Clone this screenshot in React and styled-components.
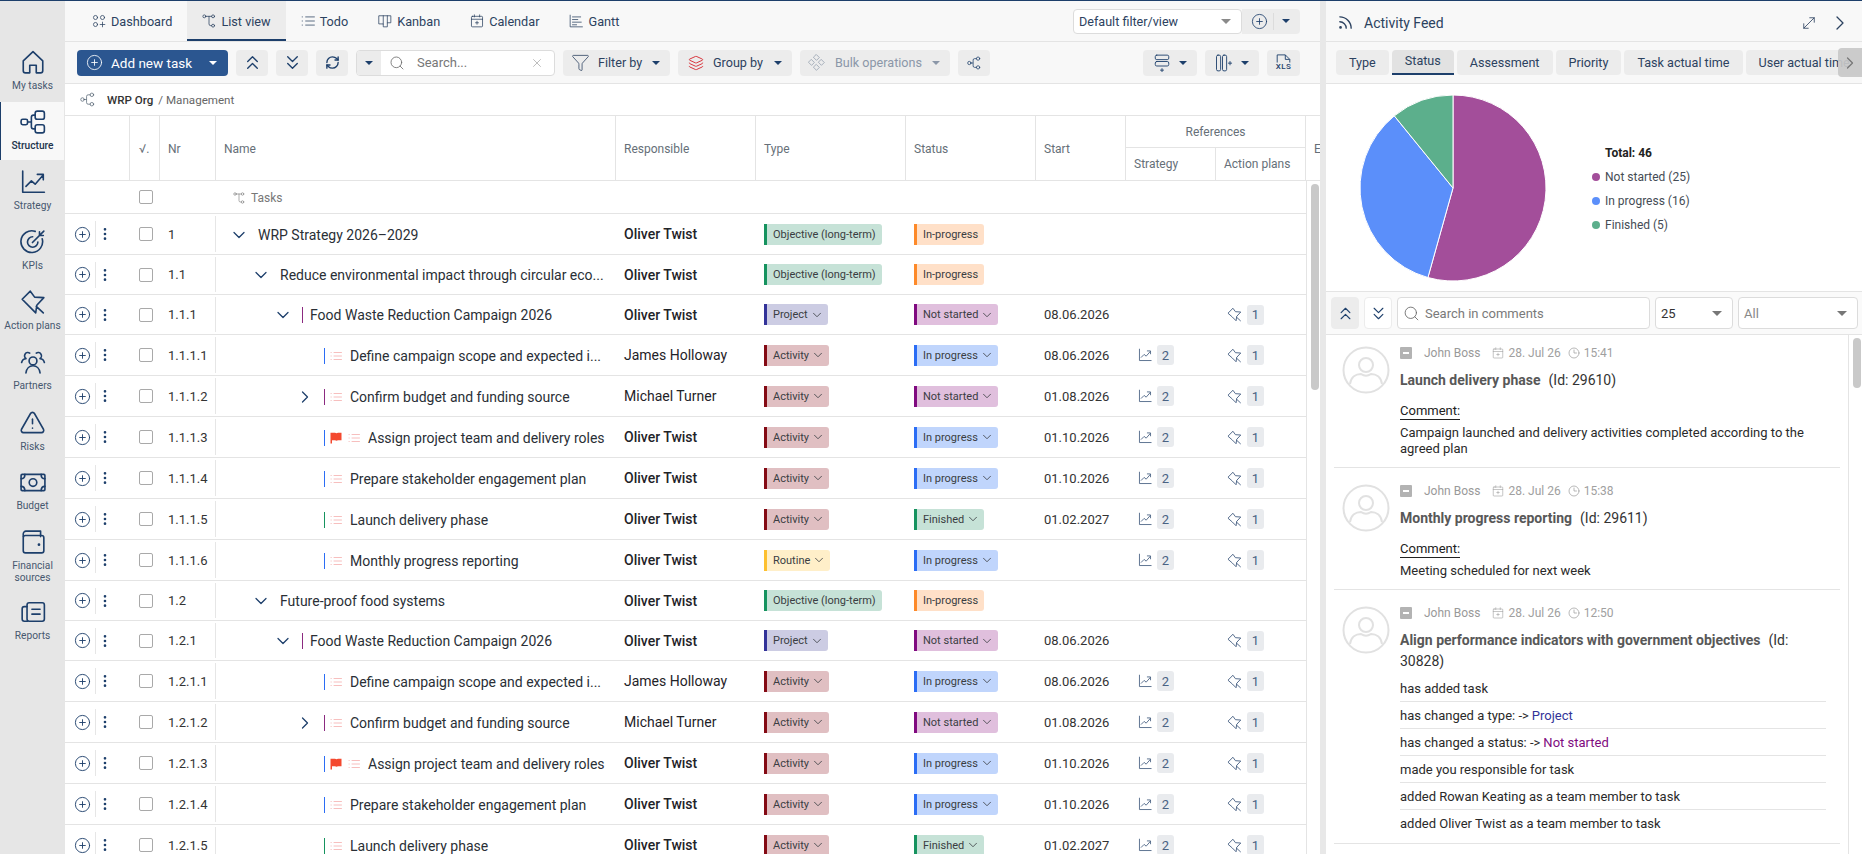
import React from "react";
import styled, { createGlobalStyle, css } from "styled-components";
import {
  ChevronDown, ChevronRight, ChevronsUp, ChevronsDown, CirclePlus, EllipsisVertical, Filter, Layers,
  MoveDiagonal, RefreshCw, Rss, Search, TriangleAlert, X,
} from "lucide-react";

const Global = createGlobalStyle`
  * { box-sizing: border-box; }
  html, body { margin: 0; padding: 0; height: 100%; overflow: hidden; }
  body { font-family: Roboto, "Liberation Sans", sans-serif; color: #212529; background: #fff; }
`;

const NAVY = "#1d3f6b";
const LINE = "#e4e4e4";

const Glyph = styled.svg.attrs({ viewBox: "0 0 24 24", fill: "none", stroke: "currentColor", strokeLinecap: "round", strokeLinejoin: "round" })`
  width: ${(p) => p.$s || 16}px;
  height: ${(p) => p.$s || 16}px;
  stroke-width: ${(p) => p.$w || 1.5};
  flex: none;
  display: block;
`;

const paths = {
  home: <path d="M3 11 12 2.5l9 8.5v9a2 2 0 0 1-2 2h-4v-7H9v7H5a2 2 0 0 1-2-2z" />,
  structure: (
    <>
      <rect x="1" y="9.5" width="6" height="5" rx="1.5" />
      <rect x="14" y="2" width="8.5" height="7.5" rx="2" />
      <rect x="14" y="14.5" width="8.5" height="7.5" rx="2" />
      <path d="M7 12h3.5M14 5.7h-1.5a2 2 0 0 0-2 2v8.6a2 2 0 0 0 2 2H14" />
    </>
  ),
  chart: <path d="M2.5 2v19.5H22.5M5.5 16l5-5 3.5 3 7-8M16 5h5.5v5" />,
  target: (
    <>
      <path d="M20.5 9a10 10 0 1 1-6.5-6.8" />
      <path d="M16.5 12a4.8 4.8 0 1 1-4.8-4.8" />
      <path d="M11.5 12.5 22 2M18 2.5V6h3.5" />
    </>
  ),
  pin: <path d="M2 9.5 9.5 2l4 5.5 8.5.5-6.5 7-1 7-5.5-5.5zM15 16l6.5 6" />,
  partners: (
    <>
      <circle cx="12" cy="11" r="3.6" />
      <path d="M5.5 22c.5-3.5 3-6.5 6.500-6.500s6 3 6.500 6.500" />
      <path d="M9 3.800a3 3 0 0 0-3.500 5M15 3.800a3 3 0 0 1 3.500 5M1.500 12.500c.5-2 2-3.500 4-3.500M22.500 12.500c-.5-2-2-3.500-4-3.500" />
    </>
  ),
  money: (
    <>
      <rect x="1" y="5" width="22" height="15" rx="1" />
      <circle cx="12" cy="12.500" r="3.500" />
      <path d="M1 9c2 0 3.500-1.500 3.500-4M23 9c-2 0-3.500-1.500-3.500-4M1 16c2 0 3.500 1.500 3.500 4M23 16c-2 0-3.500 1.500-3.500 4" />
    </>
  ),
  wallet: (
    <>
      <path d="M3 7V4.500A2.500 2.500 0 0 1 5.500 2H19v5" />
      <rect x="3" y="6" width="19" height="16" rx="2" />
      <path d="M17.500 14.500h.01" strokeWidth="2.500" />
    </>
  ),
  reports: (
    <>
      <rect x="6.500" y="3.500" width="16" height="17" rx="2" />
      <path d="M6.500 7H4a2 2 0 0 0-2 2v9.500a2 2 0 0 0 2 2h3M11 9.500h7.500M11 14h7.500" />
    </>
  ),
  dash: (
    <>
      <circle cx="6" cy="6" r="3.500" /><circle cx="18" cy="6" r="3.500" /><circle cx="6" cy="18" r="3.500" />
      <path d="M18 14v8M14 18h8" />
    </>
  ),
  tree: (
    <>
      <circle cx="4" cy="4" r="2.500" /><circle cx="19" cy="4" r="2.500" /><circle cx="19" cy="20" r="2.500" />
      <path d="M6.500 4h10M12 4v13a3 3 0 0 0 3 3h1.500" />
    </>
  ),
  todo: <path d="M8 5h15M8 12h15M8 19h15M2 5h.5M2 12h.5M2 19h.5" />,
  kanban: <path d="M2 3h20v12H16v7H9v-5H2zM9 3v14M16 3v12" />,
  calendar: (
    <>
      <rect x="2.500" y="4" width="19" height="18" rx="1.500" />
      <path d="M2.500 9h19M7.500 1.500V5M16.500 1.500V5M12 12.500v5M9.500 15h5" />
    </>
  ),
  gantt: <path d="M2 2v20h21M6 5h14M6 9.500h9M6 14h15M6 18.500h7" />,
  share: (
    <>
      <circle cx="4" cy="12" r="2.800" /><circle cx="19" cy="4.500" r="2.800" /><circle cx="19" cy="19.500" r="2.800" />
      <path d="M6.800 12h3M16.200 4.500H13a2.500 2.500 0 0 0-2.500 2.500v10a2.500 2.500 0 0 0 2.500 2.500h3.200" />
    </>
  ),
  diamonds: <path d="M12 1l4 4-4 4-4-4zM5 8l4 4-4 4-4-4zM19 8l4 4-4 4-4-4zM12 15l4 4-4 4-4-4z" />,
  addRow: (
    <>
      <rect x="3" y="1.500" width="18" height="6" rx="2" />
      <rect x="3" y="10" width="18" height="6" rx="2" />
      <path d="M12 19.500v4M10 21.500h4" />
    </>
  ),
  addCol: (
    <>
      <rect x="2" y="1.500" width="5.500" height="21" rx="2" />
      <rect x="10" y="1.500" width="5.500" height="21" rx="2" />
      <path d="M20 10v4.500M17.800 12.200h4.400" />
    </>
  ),
  clock: (
    <>
      <circle cx="12" cy="12" r="10" />
      <path d="M12 6v6h5" />
    </>
  ),
};

const Icon = ({ name, s, w }) => <Glyph $s={s} $w={w}>{paths[name]}</Glyph>;

const Shell = styled.div`
  display: flex;
  height: 100vh;
  border-top: 1px solid ${NAVY};
  overflow: hidden;
`;

/* ---------- sidebar ---------- */
const Sidebar = styled.nav`
  width: 65px;
  flex: none;
  background: #e6e6e6;
  padding-top: 41px;
  display: flex;
  flex-direction: column;
`;
const SideItem = styled.div`
  height: ${(p) => (p.$tall ? 70 : 60)}px;
  padding-top: 7px;
  display: flex;
  flex-direction: column;
  align-items: center;
  color: ${NAVY};
  ${(p) => p.$active && css`
    background: #f8f8f8;
    border-left: 1px solid ${NAVY};
    height: 58px;
    margin-bottom: 2px;
    margin-right: 1px;
  `}
`;
const SideLabel = styled.span`
  margin-top: 5px;
  font-size: 10.2px;
  line-height: 12px;
  text-align: center;
  color: ${(p) => (p.$active ? "#22344c" : "#46586f")};
  font-weight: ${(p) => (p.$active ? 500 : 400)};
`;

/* ---------- main ---------- */
const Main = styled.main`
  width: 1255px;
  flex: none;
  display: flex;
  flex-direction: column;
  min-height: 0;
`;
const TabBar = styled.div`
  height: 41px;
  flex: none;
  display: flex;
  align-items: stretch;
  padding: 0 20px 0 12px;
  background: #f8f8f8;
  border-bottom: 1px solid ${LINE};
`;
const Tab = styled.div`
  display: flex;
  align-items: center;
  gap: 5px;
  padding: 0 15px;
  font-size: 12.7px;
  color: #2c4260;
  ${(p) => p.$active && css`
    background: #ececec;
    box-shadow: inset 0 -2px 0 ${NAVY};
  `}
`;
const ViewPicker = styled.div`
  margin-left: auto;
  display: flex;
  align-items: center;
`;
const ViewSelect = styled.div`
  width: 169px;
  height: 25px;
  background: #fff;
  border: 1px solid #dcdcdc;
  border-radius: 4px;
  display: flex;
  align-items: center;
  justify-content: space-between;
  padding: 0 10px 0 5px;
  font-size: 12.6px;
  color: #2c4260;
`;
const ViewActions = styled.div`
  width: 58px;
  height: 25px;
  background: #ececec;
  border-radius: 0 4px 4px 0;
  display: flex;
  align-items: center;
  padding-left: 9px;
  color: ${NAVY};
`;
const ViewDivider = styled.span`
  width: 1px;
  height: 17px;
  background: #dcdcdc;
  margin: 0 8px 0 5px;
`;
const Caret = styled.span`
  width: 0;
  height: 0;
  flex: none;
  margin-left: ${(p) => (p.$push ? "auto" : 0)};
  border-left: ${(p) => p.$s || 4}px solid transparent;
  border-right: ${(p) => p.$s || 4}px solid transparent;
  border-top: ${(p) => p.$s || 4}px solid ${(p) => p.$c || NAVY};
`;

const Toolbar = styled.div`
  height: 42px;
  flex: none;
  display: flex;
  align-items: center;
  gap: 8px;
  padding: 0 20px 0 12px;
  background: #f8f8f8;
  border-bottom: 1px solid ${LINE};
`;
const ToolButton = styled.div`
  height: 26px;
  width: ${(p) => p.$w}px;
  flex: none;
  display: flex;
  align-items: center;
  justify-content: ${(p) => p.$justify || "center"};
  gap: ${(p) => p.$gap ?? 8}px;
  padding: ${(p) => p.$pad || 0};
  border-radius: 4px;
  background: ${(p) => (p.$bg ? p.$bg : "#ececec")};
  color: ${(p) => (p.$muted ? "#8b97a8" : p.$fg || "#2c4260")};
  font-size: 12.6px;
  white-space: nowrap;
`;
const AddLabel = styled.span`
  font-size: 13.5px;
  flex: 1;
`;
const SearchGroup = styled.div`
  width: 199px;
  height: 26px;
  flex: none;
  display: flex;
  align-items: center;
  border: 1px solid #dcdcdc;
  border-radius: 4px;
  background: #fff;
  overflow: hidden;
  color: #55626f;
`;
const SearchCaret = styled.div`
  width: 24px;
  align-self: stretch;
  background: #ececec;
  display: flex;
  align-items: center;
  justify-content: center;
`;
const SearchIcon = styled.span`
  margin-left: 8px;
  display: flex;
  color: #666;
`;
const SearchText = styled.span`
  flex: 1;
  margin-left: 12px;
  font-size: 13px;
  color: #777;
`;
const SearchClear = styled.span`
  margin-right: 10px;
  display: flex;
  color: #999;
`;
const Spacer = styled.div`flex: 1;`;

const Crumbs = styled.div`
  height: 32px;
  flex: none;
  display: flex;
  align-items: center;
  padding-left: 15px;
  border-bottom: 1px solid ${LINE};
  font-size: 11.6px;
  color: #666;
`;
const CrumbIcon = styled.span`
  display: flex;
  color: #4a5a6a;
`;
const CrumbRoot = styled.span`
  margin-left: 12px;
  margin-right: 5px;
  color: #333;
  font-weight: 500;
`;

const COLS = "65px 30px 56px 400px 140px 150px 130px 90px 90px 90px 1fr";

const HeaderGrid = styled.div`
  height: 65px;
  flex: none;
  display: grid;
  grid-template-columns: ${COLS};
  grid-template-rows: 32px 1fr;
  border-bottom: 1px solid ${LINE};
  font-size: 12px;
  color: #666f78;
`;
const HeadCell = styled.div`
  grid-row: 1 / 3;
  grid-column: ${(p) => p.$col || "auto"};
  display: flex;
  align-items: center;
  padding-left: ${(p) => p.$pad ?? 8}px;
  padding-top: 2px;
  border-right: ${(p) => (p.$last ? "none" : `1px solid ${LINE}`)};
  overflow: hidden;
  white-space: nowrap;
`;
const RefHead = styled.div`
  grid-column: 9 / 11;
  grid-row: 1;
  display: flex;
  align-items: center;
  justify-content: center;
  border-right: 1px solid ${LINE};
  border-bottom: 1px solid ${LINE};
`;
const SubHead = styled.div`
  grid-row: 2;
  grid-column: ${(p) => p.$col};
  display: flex;
  align-items: center;
  padding-left: 8px;
  border-right: 1px solid ${LINE};
`;

const TableBody = styled.div`
  flex: 1;
  min-height: 0;
  display: flex;
  overflow: hidden;
`;
const RowsColumn = styled.div`
  width: 1241px;
  flex: none;
`;
const FilterRow = styled.div`
  height: 33px;
  display: grid;
  grid-template-columns: ${COLS};
  border-bottom: 1px solid ${LINE};
  font-size: 12px;
  color: #666f78;
  align-items: center;
`;
const Tasks = styled.div`
  display: flex;
  align-items: center;
  gap: 6px;
  padding-left: 17px;
  padding-top: 1px;
  color: #777;
`;
const Row = styled.div`
  height: ${(p) => p.$h}px;
  display: grid;
  grid-template-columns: ${COLS};
  align-items: center;
  border-bottom: 1px solid ${LINE};
  font-size: 13px;
`;
const Actions = styled.div`
  display: flex;
  align-items: center;
  color: ${NAVY};
  padding-left: 9px;
`;
const ActionSep = styled.span`
  width: 1px;
  height: 26px;
  background: #e6e6e6;
  margin: 0 1px 0 4px;
`;
const CheckCell = styled.div`
  padding-left: 9px;
`;
const Check = styled.span`
  display: block;
  width: 14px;
  height: 14px;
  border: 1.5px solid #a9a9a9;
  border-radius: 2px;
  background: #fff;
`;
const NrCell = styled.div`
  padding-left: 8px;
  font-size: 13px;
  color: #333;
  white-space: nowrap;
`;
const NameCell = styled.div`
  align-self: stretch;
  margin: 2px 0 2px -1px;
  display: flex;
  align-items: center;
  padding-left: ${(p) => 17 + (p.$level - 1) * 22}px;
  padding-right: 10px;
  padding-top: 1px;
  border-left: 1px solid #e6e6e6;
  min-width: 0;
  color: #2a2f36;
`;
const Toggle = styled.span`
  width: 12px;
  flex: none;
  display: flex;
  justify-content: center;
  color: ${NAVY};
  margin-right: 13px;
  visibility: ${(p) => (p.$hidden ? "hidden" : "visible")};
  & > svg { flex: none; }
`;
const LevelBar = styled.span`
  width: 1px;
  height: 16px;
  flex: none;
  background: ${(p) => p.$c};
  margin-right: ${(p) => p.$gap}px;
`;
const ListMark = styled.span`
  color: #f08a88;
  margin-right: 8px;
  flex: none;
`;
const FlagMark = styled.svg.attrs({ viewBox: "0 0 12 12" })`
  width: 12px;
  height: 12px;
  flex: none;
  margin: 0 6px 0 5px;
`;
const NameText = styled.span`
  font-size: 14px;
  white-space: nowrap;
  min-width: 0;
`;
const Person = styled.div`
  padding-left: 8px;
  font-size: 14px;
  font-weight: ${(p) => (p.$bold ? 500 : 400)};
  color: #1f2328;
  white-space: nowrap;
`;
const BadgeCell = styled.div`padding-left: 8px;`;
const Badge = styled.span`
  display: inline-flex;
  align-items: center;
  gap: 2px;
  height: 21px;
  padding: 0 ${(p) => (p.$open ? 4 : 6)}px 0 6px;
  background: ${(p) => p.$bg};
  border-left: 3px solid ${(p) => p.$bar};
  border-radius: 0 3px 3px 0;
  font-size: 11px;
  color: #3a3d42;
  white-space: nowrap;
`;
const DateCell = styled.div`
  padding-left: 8px;
  font-size: 13px;
  color: #333;
`;
const RefCell = styled.div`
  padding-left: ${(p) => p.$pad}px;
  display: flex;
  align-items: center;
  gap: 5px;
  color: #4a6284;
`;
const CountChip = styled.span`
  width: 17px;
  height: 20px;
  border-radius: 3px;
  background: #e9ebee;
  font-size: 13px;
  display: flex;
  align-items: center;
  justify-content: center;
  color: #4a6284;
`;
const Track = styled.div`
  flex: 1;
  border-left: 1px solid ${LINE};
  padding: 3px 2px 0 4px;
`;
const Thumb = styled.div`
  width: 8px;
  height: ${(p) => p.$h}px;
  background: #c9c9c9;
  border-radius: 4px;
`;

/* ---------- feed ---------- */
const Splitter = styled.div`
  width: 6px;
  flex: none;
  background: #e8e8e8;
`;
const Feed = styled.aside`
  flex: 1;
  min-width: 0;
  display: flex;
  flex-direction: column;
`;
const FeedHead = styled.div`
  height: 41px;
  flex: none;
  display: flex;
  align-items: center;
  padding: 3px 10px 0 11px;
  gap: 10px;
  background: #f8f8f8;
  border-bottom: 1px solid ${LINE};
  color: #2c4260;
`;
const FeedTitle = styled.span`
  flex: 1;
  font-size: 14px;
`;
const FeedTabs = styled.div`
  height: 42px;
  flex: none;
  position: relative;
  display: flex;
  align-items: center;
  gap: 3px;
  padding: 0 0 0 10px;
  background: #f8f8f8;
  border-bottom: 1px solid ${LINE};
  overflow: hidden;
`;
const FeedTab = styled.div`
  height: 25px;
  flex: none;
  padding: 0 13px;
  display: flex;
  align-items: center;
  border-radius: 4px;
  background: #ececec;
  font-size: 12.6px;
  color: #2c4260;
  white-space: nowrap;
  ${(p) => p.$active && css`
    background: #e2e2e2;
    border-radius: 4px 4px 0 0;
    border-bottom: 2px solid ${NAVY};
    padding-bottom: 3px;
  `}
`;
const TabScroll = styled.div`
  position: absolute;
  right: 0;
  top: 6px;
  width: 24px;
  height: 29px;
  background: rgba(200, 200, 200, 0.92);
  border-radius: 4px 0 0 4px;
  display: flex;
  align-items: center;
  justify-content: center;
  color: #777;
`;
const ChartArea = styled.div`
  height: 208px;
  flex: none;
  display: flex;
  align-items: center;
  padding-left: 33px;
  border-bottom: 1px solid ${LINE};
`;
const PieSvg = styled.svg.attrs({ viewBox: "0 0 188 188" })`
  width: 188px;
  height: 188px;
  flex: none;
`;
const Legend = styled.div`
  margin: 2px 0 0 45px;
  display: flex;
  flex-direction: column;
  gap: 8px;
  font-size: 12px;
  color: #454c55;
`;
const LegendTotal = styled.div`
  margin-left: 13px;
  line-height: 16px;
  font-weight: 700;
  color: #222;
`;
const LegendRow = styled.div`
  display: flex;
  align-items: center;
  gap: 5px;
  line-height: 16px;
`;
const Dot = styled.span`
  width: 8px;
  height: 8px;
  border-radius: 50%;
  background: ${(p) => p.$c};
`;
const FeedTools = styled.div`
  height: 43px;
  flex: none;
  display: flex;
  align-items: center;
  gap: 5px;
  padding-left: 5px;
  border-bottom: 1px solid ${LINE};
  background: #fafafa;
  color: ${NAVY};
`;
const SquareButton = styled.div`
  width: 28px;
  height: 32px;
  border-radius: 4px;
  display: flex;
  align-items: center;
  justify-content: center;
  background: ${(p) => (p.$on ? "#ececec" : "#fff")};
  border: 1px solid #ececec;
`;
const FeedInput = styled.div`
  height: 32px;
  width: ${(p) => p.$w}px;
  flex: none;
  background: #fff;
  border: 1px solid #dcdcdc;
  border-radius: 4px;
  display: flex;
  align-items: center;
  justify-content: ${(p) => (p.$select ? "space-between" : "flex-start")};
  gap: 5px;
  padding: 1px ${(p) => (p.$select ? 10 : 5)}px 0 5px;
  font-size: 13px;
  color: ${(p) => p.$c || "#7a7a7a"};
`;
const FeedBody = styled.div`
  flex: 1;
  min-height: 0;
  display: flex;
  overflow: hidden;
`;
const FeedList = styled.div`
  width: 522px;
  flex: none;
  padding: 0 8px;
`;
const FeedItem = styled.article`
  display: flex;
  padding: 16px 0 10px 8px;
  border-bottom: 1px solid ${LINE};
  &:first-child { padding-top: 11px; }
`;
const Avatar = styled.svg.attrs({ viewBox: "0 0 48 48", fill: "none", stroke: "#e1e1e1", strokeWidth: 2 })`
  width: 48px;
  height: 48px;
  flex: none;
  margin-right: 10px;
`;
const FeedContent = styled.div`
  flex: 1;
  min-width: 0;
  padding-right: 14px;
`;
const Meta = styled.div`
  height: 14px;
  display: flex;
  align-items: center;
  margin-bottom: 10px;
  font-size: 12px;
  color: #999;
`;
const Minus = styled.span`
  width: 12px;
  height: 12px;
  border-radius: 1px;
  background: #b3b3b3;
  display: flex;
  align-items: center;
  justify-content: center;
  margin-right: 12px;
  &::before { content: ""; width: 6px; height: 1.500px; background: #fff; }
`;
const MetaName = styled.span`margin-right: 12px;`;
const MetaPart = styled.span`
  display: inline-flex;
  align-items: center;
  gap: 4px;
  margin-right: 7px;
  color: #a0a0a0;
`;
const Title = styled.div`
  font-size: 14px;
  line-height: 21px;
  color: #333;
`;
const TitleStrong = styled.strong`
  font-weight: 700;
  color: #585858;
  margin-right: 8px;
`;
const CommentLabel = styled.div`
  display: inline-block;
  margin-top: 12px;
  font-size: 13px;
  line-height: 16px;
  border-bottom: 1px solid #222;
  color: #222;
`;
const CommentText = styled.div`
  margin-top: 5px;
  font-size: 13px;
  line-height: 16px;
  color: #2a2a2a;
`;
const Changes = styled.div`
  margin-top: 3px;
  margin-bottom: -4px;
`;
const Change = styled.div`
  height: 27px;
  display: flex;
  align-items: center;
  gap: 3px;
  font-size: 13px;
  color: #2a2a2a;
  border-bottom: 1px solid ${LINE};
  &:last-child { border-bottom: none; }
`;
const ChangeValue = styled.span`color: ${(p) => p.$c};`;
const FeedTrack = styled.div`
  flex: 1;
  border-left: 1px solid ${LINE};
  padding: 3px 1px 0 4px;
`;
const XlsWrap = styled.span`
  display: flex;
  flex-direction: column;
  align-items: center;
  font-size: 8px;
  font-weight: 500;
  line-height: 8px;
  letter-spacing: 0.5px;
`;
const XlsTop = styled.svg.attrs({ viewBox: "0 0 16 10", fill: "none", stroke: "currentColor", strokeWidth: 1 })`
  width: 15px;
  height: 9px;
`;

/* ---------- data ---------- */
const TONE = {
  objective: { bg: "#c6e2d7", bar: "#16935f", t: "Objective (long-term)", fixed: true },
  inprog: { bg: "#ffe0c8", bar: "#fd8a2a", t: "In-progress", fixed: true },
  project: { bg: "#cccce3", bar: "#333399", t: "Project" },
  activity: { bg: "#e0bfc2", bar: "#840a14", t: "Activity" },
  routine: { bg: "#ffefc9", bar: "#fdc02f", t: "Routine" },
  notstarted: { bg: "#e0bfdd", bar: "#800a80", t: "Not started" },
  inprogress: { bg: "#c0d5fc", bar: "#2b6df5", t: "In progress" },
  finished: { bg: "#c6e2d7", bar: "#16935f", t: "Finished" },
};

const block = (pfx) => [
  { nr: `${pfx}.1`, level: 3, h: 40, name: "Food Waste Reduction Campaign 2026", who: "Oliver Twist", bold: 1, type: "project", status: "notstarted", start: "08.06.2026", bar: "#8b2a80", act: 1 },
  { nr: `${pfx}.1.1`, level: 4, name: "Define campaign scope and expected i...", who: "James Holloway", type: "activity", status: "inprogress", start: "08.06.2026", bar: "#2b6df5", str: 1, act: 1, list: 1 },
  { nr: `${pfx}.1.2`, level: 4, open: 1, name: "Confirm budget and funding source", who: "Michael Turner", type: "activity", status: "notstarted", start: "01.08.2026", bar: "#8b2a80", str: 1, act: 1, list: 1 },
  { nr: `${pfx}.1.3`, level: 4, flag: 1, name: "Assign project team and delivery roles", who: "Oliver Twist", bold: 1, type: "activity", status: "inprogress", start: "01.10.2026", bar: "#2b6df5", str: 1, act: 1, list: 1 },
  { nr: `${pfx}.1.4`, level: 4, name: "Prepare stakeholder engagement plan", who: "Oliver Twist", bold: 1, type: "activity", status: "inprogress", start: "01.10.2026", bar: "#2b6df5", str: 1, act: 1, list: 1 },
  { nr: `${pfx}.1.5`, level: 4, name: "Launch delivery phase", who: "Oliver Twist", bold: 1, type: "activity", status: "finished", start: "01.02.2027", bar: "#16935f", str: 1, act: 1, list: 1 },
];

const ROWS = [
  { nr: "1", level: 1, h: 41, name: "WRP Strategy 2026–2029", who: "Oliver Twist", bold: 1, type: "objective", status: "inprog" },
  { nr: "1.1", level: 2, h: 40, name: "Reduce environmental impact through circular eco...", who: "Oliver Twist", bold: 1, type: "objective", status: "inprog" },
  ...block("1.1"),
  { nr: "1.1.1.6", level: 4, name: "Monthly progress reporting", who: "Oliver Twist", bold: 1, type: "routine", status: "inprogress", bar: "#2b6df5", str: 1, act: 1, list: 1 },
  { nr: "1.2", level: 2, h: 40, name: "Future-proof food systems", who: "Oliver Twist", bold: 1, type: "objective", status: "inprog" },
  ...block("1.2"),
];

const SIDE = [
  ["home", "My tasks"], ["structure", "Structure", true], ["chart", "Strategy"], ["target", "KPIs"], ["pin", "Action plans"],
  ["partners", "Partners"], ["alert", "Risks"], ["money", "Budget"], ["wallet", "Financial sources"], ["reports", "Reports"],
];

const TABS = [["dash", "Dashboard"], ["tree", "List view", true], ["todo", "Todo"], ["kanban", "Kanban"], ["calendar", "Calendar"], ["gantt", "Gantt"]];

const StatusBadge = ({ tone }) => {
  const t = TONE[tone];
  return (
    <Badge $bg={t.bg} $bar={t.bar} $open={!t.fixed}>
      {t.t}
      {!t.fixed && <ChevronDown size={14} strokeWidth={1.4} />}
    </Badge>
  );
};

const TaskRow = ({ r }) => (
  <Row $h={r.h || 41}>
    <Actions>
      <CirclePlus size={17} strokeWidth={1.3} />
      <ActionSep />
      <EllipsisVertical size={16} strokeWidth={2} />
    </Actions>
    <CheckCell><Check /></CheckCell>
    <NrCell>{r.nr}</NrCell>
    <NameCell $level={r.level}>
      <Toggle $hidden={r.level === 4 && !r.open}>
        {r.open ? <ChevronRight size={20} strokeWidth={1.5} /> : <ChevronDown size={20} strokeWidth={1.5} />}
      </Toggle>
      {r.bar && <LevelBar $c={r.bar} $gap={r.list ? (r.flag ? 0 : 5) : 7} />}
      {r.flag && (
        <FlagMark><path d="M0.500 0.800h4.500c1 .6 2 .6 3 0h3.500v7.500H8c-1 .6-2 .6-3 0H2v3.200H0.500z" fill="#f4492f" /></FlagMark>
      )}
      {r.list && <ListMark><Icon name="todo" s={12} w={1.100} /></ListMark>}
      <NameText>{r.name}</NameText>
    </NameCell>
    <Person $bold={r.bold}>{r.who}</Person>
    <BadgeCell><StatusBadge tone={r.type} /></BadgeCell>
    <BadgeCell><StatusBadge tone={r.status} /></BadgeCell>
    <DateCell>{r.start}</DateCell>
    <RefCell $pad={12}>
      {r.str && <><Icon name="chart" s={14} /><CountChip>2</CountChip></>}
    </RefCell>
    <RefCell $pad={11}>
      {r.act && <><Icon name="pin" s={15} /><CountChip>1</CountChip></>}
    </RefCell>
    <div />
  </Row>
);

const pieSlice = (from, to) => {
  const r = 93;
  const pt = (f) => [94 + r * Math.sin(2 * Math.PI * f), 94 - r * Math.cos(2 * Math.PI * f)];
  const [x1, y1] = pt(from);
  const [x2, y2] = pt(to);
  return `M94 94L${x1} ${y1}A${r} ${r} 0 ${to - from > 0.5 ? 1 : 0} 1 ${x2} ${y2}Z`;
};

const UserAvatar = () => (
  <Avatar>
    <circle cx="24" cy="24" r="22.500" />
    <circle cx="24" cy="19" r="7" />
    <path d="M8 38c1-7 6-10 11-10 3 2 7 2 10 0 5 0 10 3 11 10" />
  </Avatar>
);

const MetaLine = ({ time }) => (
  <Meta>
    <Minus />
    <MetaName>John Boss</MetaName>
    <MetaPart><Icon name="calendar" s={12} w={1.200} />28. Jul 26</MetaPart>
    <MetaPart><Icon name="clock" s={12} w={1.500} />{time}</MetaPart>
  </Meta>
);

const XlsIcon = () => (
  <XlsWrap>
    <XlsTop><path d="M1 9.500V1h9l5 5v3.500M10 1v5h5" /></XlsTop>
    XLS
  </XlsWrap>
);

export default function App() {
  return (
    <>
      <Global />
      <Shell>
        <Sidebar>
          {SIDE.map(([ic, label, active]) => (
            <SideItem key={label} $active={active} $tall={label === "Financial sources"}>
              {ic === "alert" ? <TriangleAlert size={27} strokeWidth={1.4} /> : <Icon name={ic} s={26} />}
              <SideLabel $active={active}>{label}</SideLabel>
            </SideItem>
          ))}
        </Sidebar>

        <Main>
          <TabBar>
            {TABS.map(([ic, label, active]) => (
              <Tab key={label} $active={active}><Icon name={ic} s={14} w={1.300} />{label}</Tab>
            ))}
            <ViewPicker>
              <ViewSelect>Default filter/view<Caret $c="#8a8a8a" $s={5} /></ViewSelect>
              <ViewActions>
                <CirclePlus size={17} strokeWidth={1.200} />
                <ViewDivider />
                <Caret />
              </ViewActions>
            </ViewPicker>
          </TabBar>

          <Toolbar>
            <ToolButton $w={151} $bg="#2b5690" $fg="#fff" $pad="0 11px 0 9px" $gap={8}>
              <CirclePlus size={17} strokeWidth={1.200} />
              <AddLabel>Add new task</AddLabel>
              <Caret $c="#fff" />
            </ToolButton>
            <ToolButton $w={32} $fg={NAVY}><ChevronsUp size={23} strokeWidth={1.400} /></ToolButton>
            <ToolButton $w={32} $fg={NAVY}><ChevronsDown size={23} strokeWidth={1.400} /></ToolButton>
            <ToolButton $w={32} $fg={NAVY}><RefreshCw size={15} strokeWidth={2.200} /></ToolButton>
            <SearchGroup>
              <SearchCaret><Caret /></SearchCaret>
              <SearchIcon><Search size={16} strokeWidth={1.200} /></SearchIcon>
              <SearchText>Search...</SearchText>
              <SearchClear><X size={14} strokeWidth={1.100} /></SearchClear>
            </SearchGroup>
            <ToolButton $w={107} $pad="0 10px 0 8px" $justify="flex-start" $gap={8}>
              <Filter size={19} strokeWidth={1} />Filter by<Caret $push />
            </ToolButton>
            <ToolButton $w={114} $pad="0 10px" $justify="flex-start" $gap={9}>
              <Layers size={16} strokeWidth={1.500} color="#d9363e" />Group by<Caret $push />
            </ToolButton>
            <ToolButton $w={150} $pad="0 10px 0 8px" $justify="flex-start" $gap={10} $muted>
              <Icon name="diamonds" s={17} w={1} />Bulk operations<Caret $push $c="#8b97a8" />
            </ToolButton>
            <ToolButton $w={32} $fg={NAVY}><Icon name="share" s={14} w={1.300} /></ToolButton>
            <Spacer />
            <ToolButton $w={54} $fg={NAVY}><Icon name="addRow" s={18} w={1.200} /><Caret /></ToolButton>
            <ToolButton $w={54} $fg={NAVY}><Icon name="addCol" s={18} w={1.200} /><Caret /></ToolButton>
            <ToolButton $w={33} $fg={NAVY}><XlsIcon /></ToolButton>
          </Toolbar>

          <Crumbs>
            <CrumbIcon><Icon name="share" s={15} w={1.100} /></CrumbIcon>
            <CrumbRoot>WRP Org</CrumbRoot>/ Management
          </Crumbs>

          <HeaderGrid>
            <HeadCell />
            <HeadCell $pad={9}>√.</HeadCell>
            <HeadCell>Nr</HeadCell>
            <HeadCell>Name</HeadCell>
            <HeadCell>Responsible</HeadCell>
            <HeadCell>Type</HeadCell>
            <HeadCell>Status</HeadCell>
            <HeadCell>Start</HeadCell>
            <RefHead>References</RefHead>
            <SubHead $col={9}>Strategy</SubHead>
            <SubHead $col={10}>Action plans</SubHead>
            <HeadCell $last $col={11}>E</HeadCell>
          </HeaderGrid>

          <TableBody>
            <RowsColumn>
              <FilterRow>
                <div />
                <CheckCell><Check /></CheckCell>
                <div />
                <Tasks><Icon name="tree" s={12} w={1.200} />Tasks</Tasks>
              </FilterRow>
              {ROWS.map((r) => <TaskRow key={r.nr} r={r} />)}
            </RowsColumn>
            <Track><Thumb $h={206} /></Track>
          </TableBody>
        </Main>

        <Splitter />

        <Feed>
          <FeedHead>
            <Rss size={17} strokeWidth={1.900} />
            <FeedTitle>Activity Feed</FeedTitle>
            <MoveDiagonal size={18} strokeWidth={1.100} />
            <ChevronRight size={24} strokeWidth={1.300} />
          </FeedHead>
          <FeedTabs>
            <FeedTab>Type</FeedTab>
            <FeedTab $active>Status</FeedTab>
            <FeedTab>Assessment</FeedTab>
            <FeedTab>Priority</FeedTab>
            <FeedTab>Task actual time</FeedTab>
            <FeedTab>User actual time</FeedTab>
            <TabScroll><ChevronRight size={20} strokeWidth={1.500} /></TabScroll>
          </FeedTabs>
          <ChartArea>
            <PieSvg>
              <path d={pieSlice(0, 25 / 46)} fill="#a34e9a" stroke="#fff" strokeWidth="1" />
              <path d={pieSlice(25 / 46, 41 / 46)} fill="#5b8ffa" stroke="#fff" strokeWidth="1" />
              <path d={pieSlice(41 / 46, 1)} fill="#5caf8c" stroke="#fff" strokeWidth="1" />
            </PieSvg>
            <Legend>
              <LegendTotal>Total: 46</LegendTotal>
              <LegendRow><Dot $c="#a34e9a" />Not started (25)</LegendRow>
              <LegendRow><Dot $c="#5b8ffa" />In progress (16)</LegendRow>
              <LegendRow><Dot $c="#5caf8c" />Finished (5)</LegendRow>
            </Legend>
          </ChartArea>
          <FeedTools>
            <SquareButton $on><ChevronsUp size={21} strokeWidth={1.300} /></SquareButton>
            <SquareButton><ChevronsDown size={21} strokeWidth={1.300} /></SquareButton>
            <FeedInput $w={253}><Search size={17} strokeWidth={1.200} color="#666" />Search in comments</FeedInput>
            <FeedInput $w={78} $select $c="#333">25<Caret $c="#777" $s={5} /></FeedInput>
            <FeedInput $w={120} $select $c="#888">All<Caret $c="#777" $s={5} /></FeedInput>
          </FeedTools>
          <FeedBody>
            <FeedList>
              <FeedItem>
                <UserAvatar />
                <FeedContent>
                  <MetaLine time="15:41" />
                  <Title><TitleStrong>Launch delivery phase</TitleStrong>(Id: 29610)</Title>
                  <CommentLabel>Comment:</CommentLabel>
                  <CommentText>Campaign launched and delivery activities completed according to the agreed plan</CommentText>
                </FeedContent>
              </FeedItem>
              <FeedItem>
                <UserAvatar />
                <FeedContent>
                  <MetaLine time="15:38" />
                  <Title><TitleStrong>Monthly progress reporting</TitleStrong>(Id: 29611)</Title>
                  <CommentLabel>Comment:</CommentLabel>
                  <CommentText>Meeting scheduled for next week</CommentText>
                </FeedContent>
              </FeedItem>
              <FeedItem>
                <UserAvatar />
                <FeedContent>
                  <MetaLine time="12:50" />
                  <Title><TitleStrong>Align performance indicators with government objectives</TitleStrong>(Id: 30828)</Title>
                  <Changes>
                    <Change>has added task</Change>
                    <Change>has changed a type: -&gt; <ChangeValue $c="#333399">Project</ChangeValue></Change>
                    <Change>has changed a status: -&gt; <ChangeValue $c="#800a80">Not started</ChangeValue></Change>
                    <Change>made you responsible for task</Change>
                    <Change>added Rowan Keating as a team member to task</Change>
                    <Change>added Oliver Twist as a team member to task</Change>
                  </Changes>
                </FeedContent>
              </FeedItem>
            </FeedList>
            <FeedTrack><Thumb $h={50} /></FeedTrack>
          </FeedBody>
        </Feed>
      </Shell>
    </>
  );
}
